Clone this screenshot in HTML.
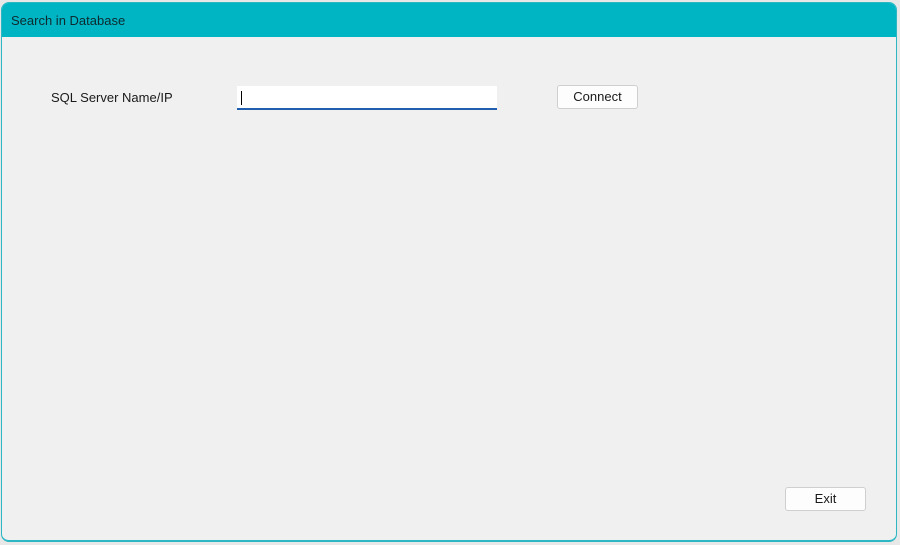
<!DOCTYPE html>
<html><head><style>
body{margin:0;width:900px;height:545px;background:#e8e8e8;position:relative;overflow:hidden;font-family:"Liberation Sans",sans-serif;}
.win{position:absolute;left:1px;top:2px;width:894px;height:537px;border:1px solid #2bb8c4;border-bottom-width:2px;border-radius:8px;background:#f0f0f0;overflow:hidden;}
.title{height:34px;background:#00b5c3;color:#0e2a30;font-size:13px;line-height:35px;padding-left:9px;}
.lbl{position:absolute;left:49px;top:87px;font-size:13px;color:#1a1a1a;}
.inp{position:absolute;left:235px;top:83px;width:260px;height:24px;background:#fff;border-bottom:2px solid #1f5fae;box-sizing:border-box;}
.inp:after{content:"";position:absolute;left:4px;top:5px;width:1px;height:14px;background:#000;}
.btn{position:absolute;background:#fdfdfd;border:1px solid #cfcfcf;border-radius:3px;font-size:13px;text-align:center;color:#1a1a1a;box-sizing:border-box;}
</style></head><body>
<div class="win">
<div class="title">Search in Database</div>
<div class="lbl">SQL Server Name/IP</div>
<div class="inp"></div>
<div class="btn" style="left:555px;top:82px;width:81px;height:24px;line-height:22px;">Connect</div>
<div class="btn" style="left:783px;top:484px;width:81px;height:24px;line-height:22px;">Exit</div>
</div>
</body></html>
